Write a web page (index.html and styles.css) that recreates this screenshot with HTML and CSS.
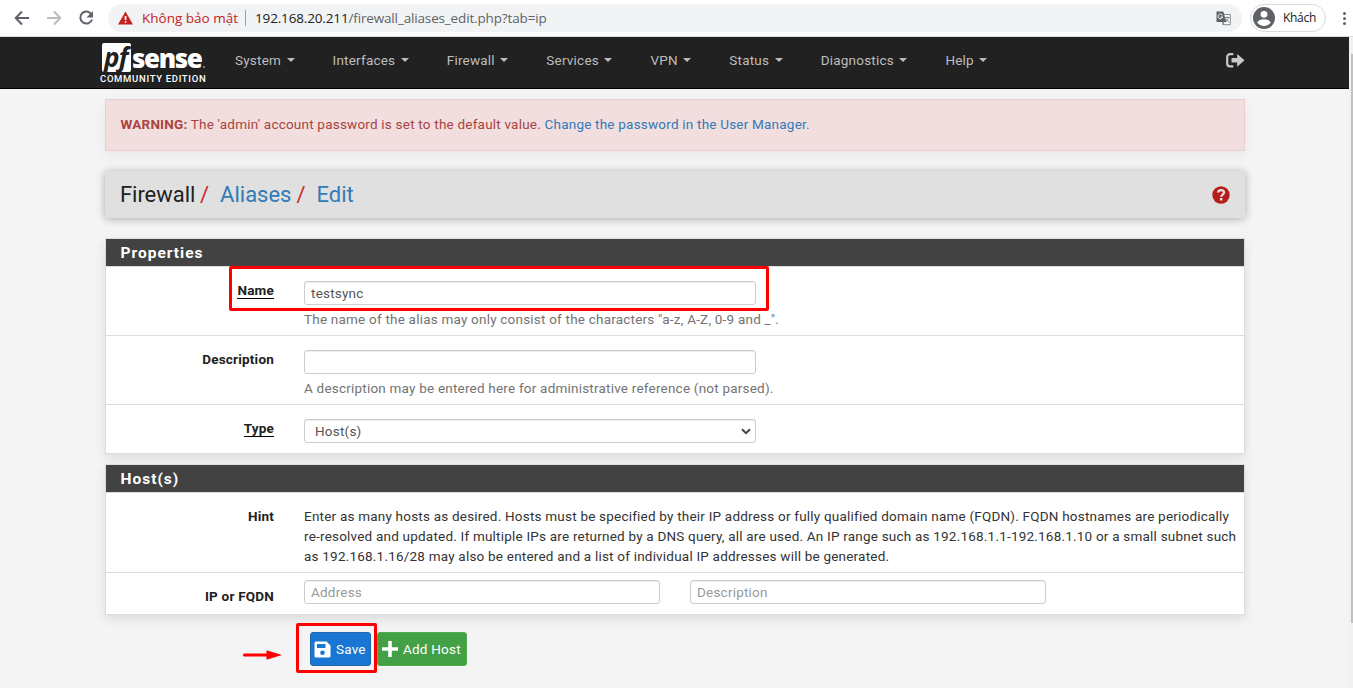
FILE: index.html
```html
<!DOCTYPE html>
<html lang="en">
<head>
<meta charset="utf-8">
<title>Firewall: Aliases: Edit</title>
<link rel="stylesheet" href="styles.css">
</head>
<body>
<div class="toolbar">
  <svg class="nav-icons" width="108" height="36" viewBox="0 0 108 36" fill="none" stroke-width="2">
    <path d="M29 18H16M22 11.5 15.7 18l6.3 6.5" stroke="#5f6368"/>
    <path d="M47 18h13M54 11.5l6.3 6.500-6.300 6.500" stroke="#bbbdbf"/>
    <path d="M91.300 14.200A6 6 0 1 0 92 19.500" stroke="#5f6368"/>
    <path d="M93 11v6.500h-6.500z" fill="#5f6368"/>
  </svg>
  <div class="omnibox">
    <svg width="15" height="14" viewBox="0 0 15 14"><path d="M7.500.5 15 13.500H0z" fill="#c5221f"/><path d="M6.700 5h1.700v4H6.700zM6.700 10.200h1.700v1.600H6.700z" fill="#fff"/></svg>
    <span class="insecure">Không bảo mật</span>
    <span class="sep"></span>
    <span class="url"><b>192.168.20.211</b>/firewall_aliases_edit.php?tab=ip</span>
    <svg class="translate" width="15" height="15" viewBox="0 0 15 15"><path d="M5.500 3.500h8.800v10.200H7z" fill="#fff" stroke="#85888c"/><path d="M.5.500h6.800l3.200 10.500H.5z" fill="#5f6368"/><path d="M6.400 4.400A2.300 2.300 0 1 0 6.600 6H4.500" fill="none" stroke="#fff"/><path d="M8.500 6.500h5M11 5.500v1M12.500 6.500c-.5 2.500-2 4-3 4.500M10 8l3 3.500M8 11l-1 3" fill="none" stroke="#777a7e" stroke-width=".9"/></svg>
  </div>
  <div class="profile">
    <svg width="22" height="22" viewBox="0 0 22 22"><circle cx="11" cy="11" r="11" fill="#5f6368"/><circle cx="11" cy="7.300" r="3.400" fill="#fff"/><path d="M4.300 15.500c1-2.400 4-3.300 6.700-3.300s5.700.9 6.700 3.300a8.300 8.300 0 0 1-13.400 0z" fill="#fff"/></svg>
    <span>Khách</span>
  </div>
  <div class="dots"><i></i><i></i><i></i></div>
</div>
<div class="viewport">
  <div class="page">
    <nav class="navbar">
      <div class="brand">
        <div class="wordmark"><span class="pf">pf</span><span class="sense">sense</span><i></i></div>
        <div class="edition">COMMUNITY EDITION</div>
      </div>
      <div class="menu">
        <span>System</span><span>Interfaces</span><span>Firewall</span><span>Services</span><span>VPN</span><span>Status</span><span>Diagnostics</span><span>Help</span>
      </div>
      <svg class="logout" width="19" height="15" viewBox="0 0 19 15"><path d="M7.300 1.200H4A2.800 2.800 0 0 0 1.200 4v6.500A2.800 2.800 0 0 0 4 13.300h3.300" fill="none" stroke="#c8c8c8" stroke-width="2.200"/><path d="M5.500 5h5.700V.9L18.500 7.300 11.200 13.700V9.600H5.500z" fill="#c8c8c8"/></svg>
    </nav>
    <main class="container">
      <div class="alert"><b>WARNING:</b> The 'admin' account password is set to the default value. <a>Change the password in the User Manager.</a></div>
      <header class="header">
        <div class="crumbs"><span>Firewall</span><i>/</i><a>Aliases</a><i>/</i><a>Edit</a></div>
        <svg width="18" height="18" viewBox="0 0 18 18"><circle cx="9" cy="9" r="8.700" fill="#b71c1c"/><path d="M5.900 6.500C6.500 4.700 7.600 4.100 9 4.100c1.700 0 3 1.100 3 2.500 0 2-2.700 2.100-2.800 4.100" fill="none" stroke="#e8e0e0" stroke-width="2.300"/><path d="M7.900 12h2.500v2.500H7.900z" fill="#e8e0e0"/></svg>
      </header>
      <section class="panel">
        <h2>Properties</h2>
        <div class="row">
          <label><u>Name</u></label>
          <div class="field"><div class="input">testsync</div><p class="help">The name of the alias may only consist of the characters "a-z, A-Z, 0-9 and _".</p></div>
        </div>
        <div class="row">
          <label>Description</label>
          <div class="field"><div class="input"></div><p class="help">A description may be entered here for administrative reference (not parsed).</p></div>
        </div>
        <div class="row type">
          <label><u>Type</u></label>
          <div class="field"><div class="input select">Host(s)<svg width="10" height="7" viewBox="0 0 10 7"><path d="m1 1.200 4 4 4-4" fill="none" stroke="#444" stroke-width="2"/></svg></div></div>
        </div>
      </section>
      <section class="panel">
        <h2>Host(s)</h2>
        <div class="row hint">
          <label>Hint</label>
          <div class="text">Enter as many hosts as desired. Hosts must be specified by their IP address or fully qualified domain name (FQDN). FQDN hostnames are periodically<br>re-resolved and updated. If multiple IPs are returned by a DNS query, all are used. An IP range such as 192.168.1.1-192.168.1.10 or a small subnet such<br>as 192.168.1.16/28 may also be entered and a list of individual IP addresses will be generated.</div>
        </div>
        <div class="row hosts">
          <label>IP or FQDN</label>
          <div class="pair"><div class="input empty">Address</div><div class="input empty">Description</div></div>
        </div>
      </section>
      <div class="actions">
        <div class="btn save"><svg width="17" height="17" viewBox="0 0 17 17"><path d="M2 .5h10.500l4 4V15a1.500 1.500 0 0 1-1.500 1.500H2A1.500 1.500 0 0 1 .5 15V2A1.500 1.500 0 0 1 2 .5z" fill="#fff"/><path d="M3 3h8.500v4H3z" fill="#1976d2"/><circle cx="8.500" cy="11.800" r="2.300" fill="#1976d2"/></svg><span>Save</span></div>
        <div class="btn add"><svg width="16" height="16" viewBox="0 0 16 16"><path d="M8 0v16M0 8h16" stroke="#fff" stroke-width="3.600"/></svg><span>Add Host</span></div>
      </div>
    </main>
  </div>
  <div class="scrollbar"><div class="thumb"></div></div>
</div>
<div class="mark mark-name"></div>
<div class="mark mark-save"></div>
<svg class="arrow" width="40" height="12" viewBox="0 0 40 12"><path d="M1.500 6H26" stroke="red" stroke-width="3" stroke-linecap="round"/><path d="M23.500 1.200 39 6l-15.500 4.800z" fill="red"/></svg>
</body>
</html>
```
FILE: styles.css
```css
* { box-sizing: border-box; }
body { margin: 0; height: 688px; overflow: hidden; position: relative; background: #f4f4f4; font: 13.5px/20px Roboto, sans-serif; letter-spacing: .21px; color: #333; }
svg { display: block; flex: none; }
i { font-style: normal; }
.toolbar { height: 37px; display: flex; align-items: center; background: #fff; border-bottom: 1px solid #dadce0; font-family: "Open Sans", sans-serif; letter-spacing: 0; }
.omnibox { width: 1134px; height: 28px; border-radius: 14px; background: #f1f3f4; display: flex; align-items: center; padding: 0 11px 0 10px; white-space: nowrap; font-size: 13.5px; }
.insecure { width: 96px; margin-left: 9px; color: #c5221f; letter-spacing: 0; }
.sep { width: 1px; height: 16px; margin: 0 9px 0 7px; background: #9aa0a6; }
.url { color: #5f6368; letter-spacing: -.15px; }
.url b { font-weight: 400; color: #202124; }
.translate { margin-left: auto; }
.profile { width: 76px; height: 28px; margin-left: 8px; padding-left: 2px; border: 1px solid #dadce0; border-radius: 14px; display: flex; align-items: center; gap: 8px; font-size: 12px; letter-spacing: -.3px; color: #202124; }
.dots { margin-left: 17px; display: grid; gap: 2px; }
.dots i { width: 3px; height: 3px; border-radius: 50%; background: #5f6368; }
.viewport { display: flex; height: 651px; }
.page { width: 1349px; }
.navbar { height: 52px; background: #212121; border-bottom: 1px solid #000; display: flex; padding-left: 99px; }
.brand { width: 136px; padding-top: 6px; color: #fff; white-space: nowrap; }
.wordmark { display: flex; margin-left: 3px; font-family: "Open Sans", sans-serif; font-weight: 700; }
.wordmark i { width: 2px; height: 2px; margin-top: 23px; background: #777; }
.pf { width: 29px; height: 29px; border-radius: 2px; background: #fff; color: #212121; font-size: 26px; line-height: 29px; font-style: italic; letter-spacing: -.8px; padding-left: 2px; }
.sense { width: 72px; padding-left: 1px; font-size: 26px; line-height: 30px; font-weight: 800; letter-spacing: -1.400px; }
.edition { margin-left: 1px; font-size: 9.5px; line-height: 12px; font-weight: 500; letter-spacing: .68px; }
.menu { display: flex; gap: 38px; padding-top: 13px; color: #bdbdbd; letter-spacing: .21px; }
.menu span { display: flex; align-items: center; height: 20px; }
.menu span::after { content: ""; margin-left: 5.500px; border: 4px solid transparent; border-top-color: #bdbdbd; border-bottom: 0; }
.logout { margin: 16px 104px 0 auto; }
.container { width: 1140px; margin: 10px 0 0 105px; }
.alert { height: 52px; padding: 14px 14.500px; background: #f2dede; border: 1px solid #ebccd1; color: #a94442; box-shadow: 0 4px 12px rgba(0,0,0,.06); white-space: nowrap; }
a { color: #337ab7; }
.header { margin: 20px 0; height: 47px; padding: 0 15px; display: flex; justify-content: space-between; align-items: center; background: #e0e0e0; box-shadow: 0 1px 8px rgba(0,0,0,.3); border-radius: 2px; }
.crumbs { display: flex; font-size: 22px; color: #212121; letter-spacing: 0; }
.crumbs i { color: #c62828; margin: 0 11px 0 5px; }
.crumbs span { width: 75px; letter-spacing: -.05px; }
.panel { margin-bottom: 10px; border: 1px solid #ddd; background: #fff; box-shadow: 0 4px 10px rgba(0,0,0,.1); }
.panel h2 { margin: 0; height: 28px; padding-left: 14.500px; background: #424242; border-bottom: 1px solid #ddd; color: #fff; font-size: 15.500px; line-height: 28px; font-weight: 700; letter-spacing: 1px; }
.row { height: 69px; display: flex; border-bottom: 1px solid #ddd; }
.row:last-child { border-bottom: 0; }
label { width: 168px; margin-right: 30px; padding-top: 13px; text-align: right; font-weight: 700; color: #212121; line-height: 20px; }
label u { display: inline-block; line-height: 16px; text-decoration: none; border-bottom: 1px solid #000; }
.field { padding-top: 14px; width: 600px; }
.input { width: 452px; height: 24px; border: 1px solid #ccc; border-radius: 3px; background: #fff; color: #555; padding-left: 6px; line-height: 23px; box-shadow: inset 0 1px 1px rgba(0,0,0,.075); }
.help { margin: 4px 0 0; color: #737373; white-space: nowrap; }
.type { height: 48px; }
.select { display: flex; justify-content: space-between; align-items: center; padding: 0 4px 0 10px; }
.hint { height: 80px; }
.text { padding-top: 13px; white-space: nowrap; color: #333; }
.hosts { height: 41px; }
.pair { display: flex; gap: 30px; padding-top: 7px; }
.pair .input { width: 356px; color: #999; }
.actions { display: flex; gap: 6px; margin: 17px 0 0 205px; }
.btn { height: 34px; display: flex; align-items: center; border-radius: 3px; color: #fff; border: 1px solid; white-space: nowrap; }
.btn span { padding-bottom: 1px; }
.save { width: 61px; padding-left: 3px; gap: 5px; background: #1976d2; border-color: #2068a8; }
.add { width: 90px; padding-left: 4px; gap: 5px; background: #43a047; border-color: #4cae4c; }
.scrollbar { width: 4px; padding: 17px 0 0 2px; background: #f1f1f1; }
.thumb { height: 569px; background: #c1c1c1; }
.mark { position: absolute; border: 3px solid red; border-radius: 2px; }
.mark-name { left: 229px; top: 266px; width: 540px; height: 45px; }
.mark-save { left: 296px; top: 623px; width: 81px; height: 50px; }
.arrow { position: absolute; left: 243px; top: 649px; }
```
